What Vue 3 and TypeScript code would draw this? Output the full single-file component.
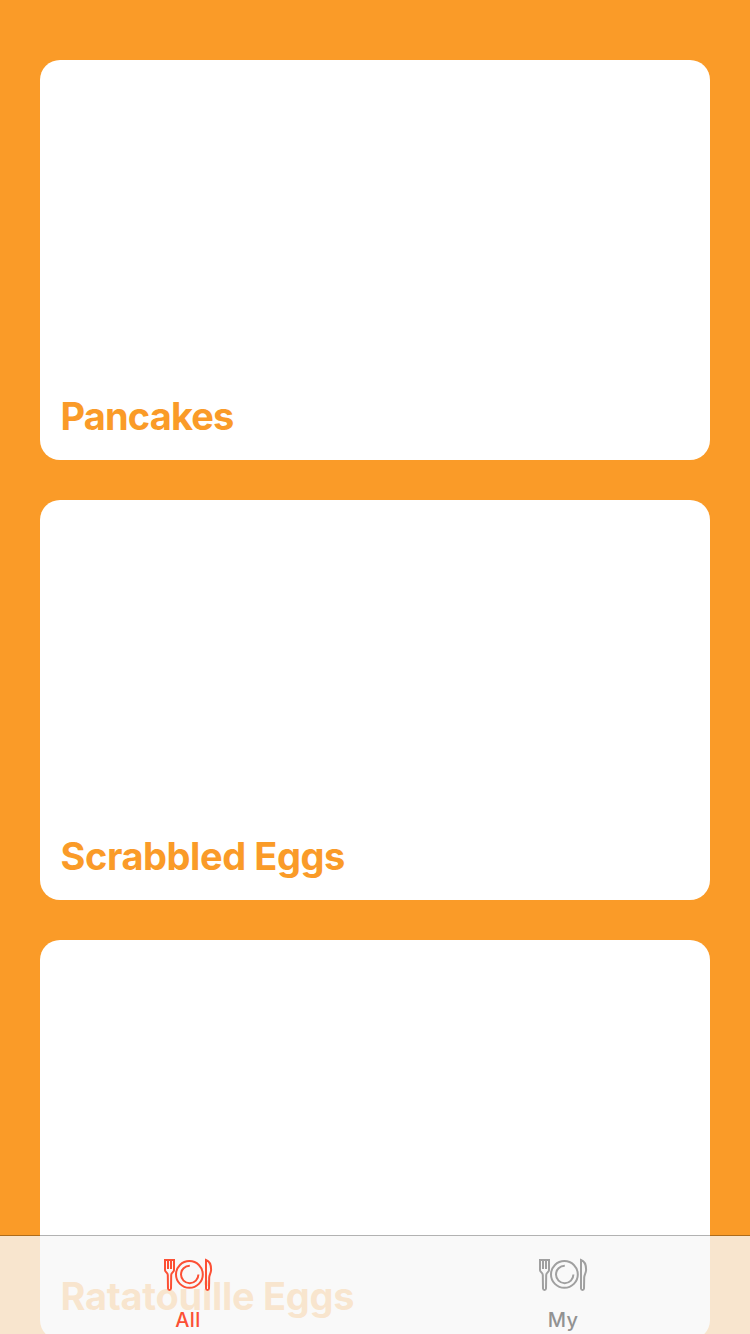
<script setup lang="ts">
interface Recipe {
  id: number
  title: string
  tracking: number
}

interface Tab {
  label: string
  active: boolean
}

const recipes: Recipe[] = [
  { id: 1, title: 'Pancakes', tracking: -0.85 },
  { id: 2, title: 'Scrabbled Eggs', tracking: -0.43 },
  { id: 3, title: 'Ratatouille Eggs', tracking: -0.29 },
]

const tabs: Tab[] = [
  { label: 'All', active: true },
  { label: 'My', active: false },
]
</script>

<template>
  <div class="screen">
    <main class="recipes">
      <article v-for="recipe in recipes" :key="recipe.id" class="card">
        <h2 class="title" :style="{ letterSpacing: `${recipe.tracking}px` }">{{ recipe.title }}</h2>
      </article>
    </main>
    <nav class="tab-bar">
      <button
        v-for="tab in tabs"
        :key="tab.label"
        type="button"
        class="tab"
        :class="{ active: tab.active }"
      >
        <svg class="icon" width="50" height="34" viewBox="0 0 50 34" aria-hidden="true">
          <path d="M2 2H11V12C11 14.2 8.2 14.2 8.2 17L8 30.5C7.8 32.4 5.2 32.4 5 30.5L4.8 17C4.8 14.2 2 14.2 2 12Z" />
          <path d="M5 2V11M8 2V11" />
          <circle cx="26.4" cy="16.4" r="13.4" />
          <path d="M26.8 7.8A8.7 8.7 0 1 0 35.4 16.4" />
          <path d="M43 2C46.5 3.2 48.1 7.5 48.1 11.5C48.1 15.5 46.3 16.5 46.2 19.5L46 30.5C45.8 32.4 43.2 32.4 43 30.5Z" />
        </svg>
        <span class="label">{{ tab.label }}</span>
      </button>
    </nav>
  </div>
</template>

<style>
body {
  margin: 0;
}
</style>

<style scoped>
.screen {
  position: relative;
  width: 750px;
  height: 1334px;
  overflow: hidden;
  background: #fa9b28;
  font-family: Inter, Roboto, 'Liberation Sans', sans-serif;
}

.recipes {
  display: flex;
  flex-direction: column;
  gap: 40px;
  padding: 60px 40px 0;
}

.card {
  display: flex;
  flex: none;
  align-items: flex-end;
  box-sizing: border-box;
  height: 400px;
  padding: 0 20.5px 20px;
  border-radius: 20px;
  background: #fff;
}

.title {
  margin: 0;
  color: #fa9b28;
  font-size: 38px;
  font-weight: 700;
  line-height: 48px;
  white-space: nowrap;
}

.tab-bar {
  position: absolute;
  right: 0;
  bottom: 0;
  left: 0;
  display: flex;
  box-sizing: border-box;
  height: 99px;
  border-top: 1px solid rgba(0, 0, 0, 0.3);
  background: rgba(248, 248, 248, 0.8);
  background-clip: padding-box;
}

.tab {
  display: flex;
  flex: 1;
  flex-direction: column;
  align-items: center;
  padding: 22px 0 0;
  border: 0;
  background: none;
  color: #929292;
  font-family: inherit;
}

.tab.active {
  color: #fc5035;
}

.icon {
  flex: none;
  fill: none;
  stroke: #a0a0a0;
  stroke-width: 2;
}

.active .icon {
  stroke: currentColor;
}

.label {
  margin-top: 16px;
  padding-left: 1px;
  font-size: 20px;
  font-weight: 450;
  line-height: 24px;
  letter-spacing: 0.4px;
}
</style>
